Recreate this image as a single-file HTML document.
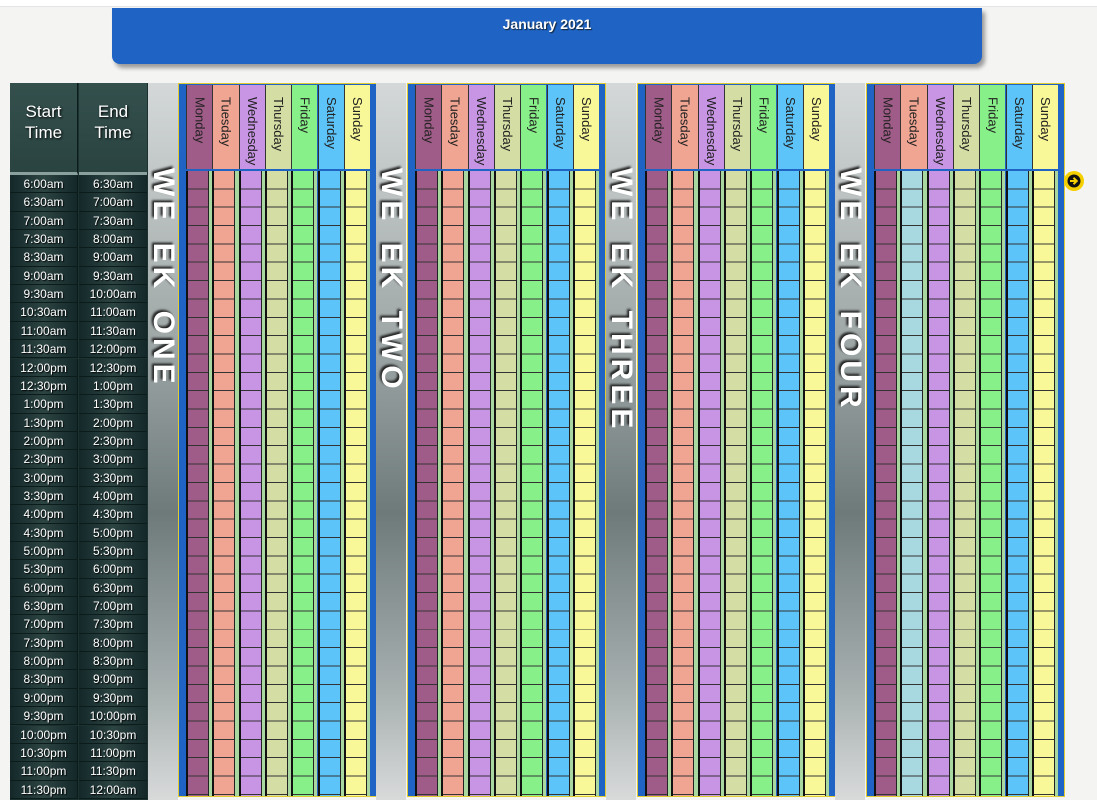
<!DOCTYPE html>
<html><head><meta charset="utf-8">
<style>
*{margin:0;padding:0;box-sizing:border-box}
body{width:1097px;height:800px;background:#f4f4f2;position:relative;overflow:hidden;font-family:"Liberation Sans",sans-serif}
.topline{position:absolute;left:0;top:0;width:1097px;height:7px;background:#fff;border-bottom:1px solid #e4e4e4}
.title{position:absolute;left:112px;top:8px;width:870px;height:56px;background:#1f64c4;border-radius:0 0 8px 8px;box-shadow:3px 4px 4px #9a9a9a;color:#fff;font-weight:bold;font-size:14px;text-align:center;padding-top:8px;text-shadow:1px 1px 1px #123}
.tt{position:absolute;left:10px;top:83px;width:138px;height:717px;background:#1c3230}
.th{position:absolute;top:0;width:68px;height:92px;background:linear-gradient(#34504d,#2a4341);color:#fff;font-size:17px;text-align:center;padding-top:18px;line-height:21px;text-shadow:1px 1px 2px #000;border-bottom:3px solid #8aa09c}
.cell{position:absolute;width:68px;height:18.35px;color:#fff;font-size:12px;text-align:center;line-height:18px;text-shadow:1px 1px 1px #000;border-bottom:1px solid #0c1c1a;background:linear-gradient(90deg,#14282a,#2c4442 50%,#14282a)}
.band{position:absolute;top:83px;height:717px;background:linear-gradient(180deg,#d4d8d8 0%,#a0a8a8 35%,#6e7a7a 60%,#a8b0b0 85%,#d8dada 100%)}
.wk{position:absolute;top:168px;writing-mode:vertical-rl;color:#fff;font-weight:bold;font-size:30px;letter-spacing:4px;word-spacing:6px;text-shadow:-2px 2px 2px #222;white-space:pre;line-height:30px}
.blk{position:absolute;top:83px;width:199px;height:714px;border:1px solid #e0cc30;background:#1f64c4}
.col{position:absolute;top:1px;width:26.3px;height:711px}
.hd{position:absolute;left:0;top:0;width:100%;height:84px;border-left:1px solid #333;writing-mode:vertical-rl;font-size:13px;color:#222;padding-top:12px;line-height:26px;text-align:left}
.gr{position:absolute;top:86px;left:0;width:100%;height:625px;background:#a8d8a0}
.in{position:absolute;left:0;top:0;width:23px;height:625px;border-left:2px solid #111;border-right:1px solid #222;background-image:repeating-linear-gradient(180deg,transparent 0,transparent 17.35px,#333 17.35px,#333 18.35px)}
.arrow{position:absolute;left:1064px;top:171px;width:20px;height:20px;border-radius:50%;background:#f5d000;}
</style></head><body>
<div class="topline"></div>
<div class="title">January 2021</div>
<div class="tt" id="tt">
<div class="th" style="left:0;border-right:1px solid #0c1c1a">Start<br>Time</div>
<div class="th" style="left:69px">End<br>Time</div>
</div>
<div id="wk"></div>
<div class="arrow"><svg width="20" height="20" viewBox="0 0 20 20"><circle cx="10" cy="10" r="6.5" fill="#111"/><path d="M6 10h6M9.5 6.8L12.8 10L9.5 13.2" stroke="#f5d000" stroke-width="2" fill="none"/></svg></div>
<script>
var st=["6:00am","6:30am","7:00am","7:30am","8:30am","9:00am","9:30am","10:30am","11:00am","11:30am","12:00pm","12:30pm","1:00pm","1:30pm","2:00pm","2:30pm","3:00pm","3:30pm","4:00pm","4:30pm","5:00pm","5:30pm","6:00pm","6:30pm","7:00pm","7:30pm","8:00pm","8:30pm","9:00pm","9:30pm","10:00pm","10:30pm","11:00pm","11:30pm"];
var en=["6:30am","7:00am","7:30am","8:00am","9:00am","9:30am","10:00am","11:00am","11:30am","12:00pm","12:30pm","1:00pm","1:30pm","2:00pm","2:30pm","3:00pm","3:30pm","4:00pm","4:30pm","5:00pm","5:30pm","6:00pm","6:30pm","7:00pm","7:30pm","8:00pm","8:30pm","9:00pm","9:30pm","10:00pm","10:30pm","11:00pm","11:30pm","12:00am"];
var h="";
for(var i=0;i<34;i++){var y=92+i*18.35;
h+='<div class="cell" style="left:0;top:'+y+'px;border-right:1px solid #0c1c1a">'+st[i]+'</div><div class="cell" style="left:69px;top:'+y+'px">'+en[i]+'</div>';}
document.getElementById('tt').innerHTML+=h;
var days=["Monday","Tuesday","Wednesday","Thursday","Friday","Saturday","Sunday"];
var cols=["#a05c88","#f0a492","#c894e4","#d4dea4","#88f088","#5cc4f8","#f8f898"];
var xs=[178,407,637,866],names=["WE EK ONE","WE EK TWO","WE EK THREE","WE EK FOUR"];
var bx=[148,376,606,835];
var o="";
for(var w=0;w<4;w++){
o+='<div class="band" style="left:'+bx[w]+'px;width:30px"></div>';
o+='<div class="wk" style="left:'+(bx[w]+0)+'px">'+names[w]+'</div>';
o+='<div class="blk" style="left:'+xs[w]+'px">';
for(var d=0;d<7;d++){var c=cols[d];var cc=(w==3&&d==1)?"#a8d8e0":c;
o+='<div class="col" style="left:'+(7+d*26.3)+'px"><div class="hd" style="background:'+c+'">'+days[d]+'</div><div class="gr"><div class="in" style="background-color:'+cc+'"></div></div></div>';}
o+='</div>';}
document.getElementById('wk').innerHTML=o;
</script>
</body></html>
